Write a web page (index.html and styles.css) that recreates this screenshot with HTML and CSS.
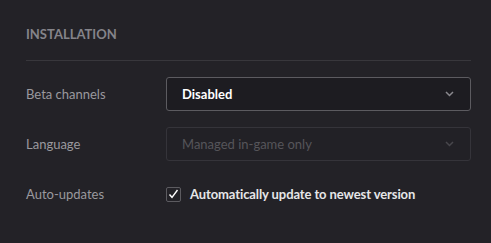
FILE: index.html
```html
<!DOCTYPE html>
<html lang="en">
<head>
    <meta charset="UTF-8">
    <meta name="viewport" content="width=device-width, initial-scale=1.0">
    <title>Installation settings</title>
    <link rel="stylesheet" href="styles.css">
</head>
<body>
    <div class="section">
        <h2 class="section-title">Installation</h2>
        <div class="row">
            <label class="row-label">Beta channels</label>
            <div class="select">
                <span class="select-value">Disabled</span>
                <svg class="chevron" width="9" height="6" viewBox="0 0 9 6"><path d="M1 1l3.5 3.5L8 1" fill="none" stroke="currentColor" stroke-width="1.5"/></svg>
            </div>
        </div>
        <div class="row">
            <label class="row-label">Language</label>
            <div class="select disabled">
                <span class="select-value">Managed in-game only</span>
                <svg class="chevron" width="9" height="6" viewBox="0 0 9 6"><path d="M1 1l3.5 3.5L8 1" fill="none" stroke="currentColor" stroke-width="1.5"/></svg>
            </div>
        </div>
        <div class="row">
            <label class="row-label">Auto-updates</label>
            <div class="check">
                <span class="check-box">
                    <svg width="11" height="10" viewBox="0 0 11 10"><path d="M1.5 5.5l2.5 2.8L9.5 1" fill="none" stroke="#fff" stroke-width="1.4"/></svg>
                </span>
                <span class="check-label">Automatically update to newest version</span>
            </div>
        </div>
    </div>
</body>
</html>
```

FILE: styles.css
```css
body {
    margin: 0;
    background-color: #232227;
    font-family: Lato, "Open Sans", sans-serif;
    font-size: 13px;
}
.section {
    padding: 24px 20px 0 26px;
}
.section-title {
    margin: 0;
    padding-bottom: 16px;
    font-size: 13px;
    font-weight: bold;
    text-transform: uppercase;
    color: #85848a;
    border-bottom: 1px solid #38373c;
    line-height: 20px;
}
.row {
    display: flex;
    align-items: center;
    margin-top: 16px;
}
.row-label {
    width: 140px;
    color: #9a999e;
}
.select {
    flex: 1;
    display: flex;
    align-items: center;
    justify-content: space-between;
    height: 32px;
    padding: 0 16px 0 15px;
    border: 1px solid #5c5b60;
    border-radius: 3px;
    background-color: #1d1c21;
    color: #ffffff;
    font-weight: bold;
}
.select .chevron {
    color: #8a898e;
}
.select.disabled {
    border-color: #35343a;
    background-color: #222126;
    color: #56555a;
    font-weight: normal;
}
.select.disabled .chevron {
    color: #48474c;
}
.row:last-child {
    margin-top: 25px;
}
.check {
    display: flex;
    align-items: center;
}
.check-box {
    display: flex;
    align-items: center;
    justify-content: center;
    width: 13px;
    height: 13px;
    border: 1px solid #5c5b60;
    border-radius: 2px;
    margin-right: 9px;
}
.check-label {
    color: #e6e6e8;
    font-weight: bold;
    letter-spacing: -0.1px;
}
```
